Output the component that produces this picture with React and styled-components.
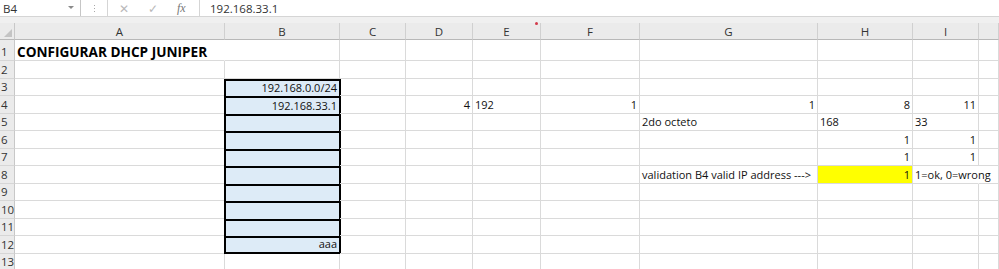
import React from "react"
import styled, { createGlobalStyle } from "styled-components"

const GlobalStyle = createGlobalStyle`
  html, body {
    margin: 0;
    padding: 0;
    background: #fff;
    overflow: hidden;
  }
  body {
    font-family: "Open Sans", "Liberation Sans", sans-serif;
  }
`

const Sheet = styled.div`
  width: 999px;
  height: 269px;
  position: relative;
  overflow: hidden;
  background: #fff;
`

const FormulaBar = styled.div`
  display: flex;
  align-items: stretch;
  height: 16px;
  border-bottom: 1px solid #d5d5d5;
  font-size: 11.5px;
  color: #333;
`

const NameBox = styled.div`
  width: 81px;
  display: flex;
  align-items: center;
  justify-content: space-between;
  padding: 0 6px 0 3px;
  box-sizing: border-box;
  border-right: 1px solid #c6c6c6;
`

const Caret = styled.span`
  width: 0;
  height: 0;
  border-left: 3px solid transparent;
  border-right: 3px solid transparent;
  border-top: 3px solid #8a8a8a;
  margin-top: -2px;
`

const Grip = styled.div`
  width: 26px;
  display: flex;
  flex-direction: column;
  align-items: center;
  justify-content: center;
  gap: 2px;
  & > i {
    width: 1px;
    height: 1px;
    background: #a8a8a8;
  }
`

const Buttons = styled.div`
  width: 93px;
  display: flex;
  align-items: center;
  justify-content: space-around;
  border-left: 1px solid #d5d5d5;
  border-right: 1px solid #d5d5d5;
  box-sizing: border-box;
  padding: 0 4px 0 2px;
  color: #b9b9b9;
  font-size: 12px;
`

const Fx = styled.span`
  font-family: "Liberation Serif", serif;
  font-style: italic;
  font-size: 12px;
  color: #777;
`

const FormulaInput = styled.div`
  flex: 1;
  display: flex;
  align-items: center;
  padding-left: 10px;
`

const Strip = styled.div`
  height: 6px;
  background: #f0f0f0;
`

const Grid = styled.div`
  display: grid;
  grid-template-columns: 15px 210px 115px 66px 67px 68px 99px 178px 95px 66px 1fr;
  grid-template-rows: 17px 21px repeat(13, 17.5px);
  color: #111;
`

const ColHead = styled.div`
  background: #ebebeb;
  border-right: 1px solid ${p => (p.$corner ? "#c8c8c8" : "#d0d0d0")};
  border-bottom: 1px solid #b8b8b8;
  box-sizing: border-box;
  display: flex;
  align-items: center;
  justify-content: center;
  color: #333;
  position: relative;
  font-size: 11.5px;
`

const CornerMark = styled.span`
  position: absolute;
  right: 2px;
  bottom: 2px;
  width: 0;
  height: 0;
  border-left: 8px solid transparent;
  border-bottom: 8px solid #c4c4c4;
`

const RowHead = styled.div`
  background: #ebebeb;
  border-right: 1px solid #c8c8c8;
  border-bottom: 1px solid #d6d6d6;
  box-sizing: border-box;
  display: flex;
  align-items: flex-end;
  padding: 0 0 1px 1px;
  color: #333;
  font-size: 11.5px;
  line-height: 14px;
`

const Cell = styled.div`
  box-sizing: border-box;
  border-right: 1px solid ${p => (p.$openRight ? "transparent" : "#dadada")};
  border-bottom: 1px solid #dadada;
  background: ${p => p.$fill || "transparent"};
  display: flex;
  align-items: flex-end;
  justify-content: ${p => (p.$align === "right" ? "flex-end" : "flex-start")};
  padding: 0 2px 1px 2px;
  white-space: nowrap;
  overflow: visible;
  line-height: 14px;
  font-weight: ${p => (p.$bold ? 700 : 400)};
  font-size: ${p => (p.$bold ? "13.6px" : "11px")};
  color: ${p => (p.$bold ? "#000" : "#111")};
  ${p =>
    p.$boxed &&
    `
    border: 2px solid #000;
    border-bottom: ${p.$boxLast ? "2px solid #000" : "none"};
    margin-left: -1px;
    margin-right: -1px;
  `}
`

const Dot = styled.span`
  position: absolute;
  left: 535px;
  top: 22px;
  width: 3px;
  height: 3px;
  border-radius: 50%;
  background: #d23a4a;
`

const columns = ["A", "B", "C", "D", "E", "F", "G", "H", "I", "J"]

const BLUE = "#ddebf7"
const YELLOW = "#ffff00"

const cells = {
  A1: { text: "CONFIGURAR DHCP JUNIPER", bold: true },
  B3: { text: "192.168.0.0/24", align: "right" },
  B4: { text: "192.168.33.1", align: "right" },
  B12: { text: "aaa", align: "right" },
  D4: { text: "4", align: "right" },
  E4: { text: "192" },
  F4: { text: "1", align: "right" },
  G4: { text: "1", align: "right" },
  H4: { text: "8", align: "right" },
  I4: { text: "11", align: "right" },
  G5: { text: "2do octeto" },
  H5: { text: "168" },
  I5: { text: "33" },
  H6: { text: "1", align: "right" },
  I6: { text: "1", align: "right" },
  H7: { text: "1", align: "right" },
  I7: { text: "1", align: "right" },
  G8: { text: "validation B4 valid IP address --->" },
  H8: { text: "1", align: "right", fill: YELLOW },
  I8: { text: "1=ok, 0=wrong", openRight: true },
}

const rows = Array.from({ length: 13 }, (_, i) => i + 1)

export default function App() {
  return (
    <Sheet>
      <GlobalStyle />
      <FormulaBar>
        <NameBox>
          B4
          <Caret />
        </NameBox>
        <Grip>
          <i />
          <i />
          <i />
        </Grip>
        <Buttons>
          <span>✕</span>
          <span>✓</span>
          <Fx>fx</Fx>
        </Buttons>
        <FormulaInput>192.168.33.1</FormulaInput>
      </FormulaBar>
      <Strip />
      <Grid>
        <ColHead $corner>
          <CornerMark />
        </ColHead>
        {columns.map(c => (
          <ColHead key={c}>{c === "J" ? "" : c}</ColHead>
        ))}
        {rows.map(r => (
          <React.Fragment key={r}>
            <RowHead>{r}</RowHead>
            {columns.map(c => {
              const id = c + r
              const data = cells[id] || {}
              const boxed = c === "B" && r >= 3 && r <= 12
              return (
                <Cell
                  key={id}
                  $align={data.align}
                  $bold={data.bold}
                  $fill={data.fill || (boxed ? BLUE : null)}
                  $boxed={boxed}
                  $boxLast={r === 12}
                  $openRight={data.openRight || (r === 1 && c === "A")}
                >
                  {data.text}
                </Cell>
              )
            })}
          </React.Fragment>
        ))}
      </Grid>
      <Dot />
    </Sheet>
  )
}
